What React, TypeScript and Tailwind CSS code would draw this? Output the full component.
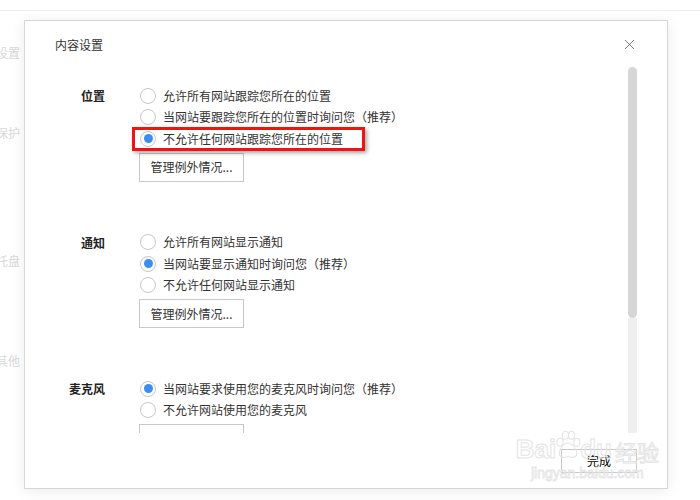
import { X } from 'lucide-react';

type Option = { label: string; checked?: boolean; highlight?: boolean };

const sections: { title: string; options: Option[] }[] = [
  {
    title: '位置',
    options: [
      { label: '允许所有网站跟踪您所在的位置' },
      { label: '当网站要跟踪您所在的位置时询问您（推荐）' },
      { label: '不允许任何网站跟踪您所在的位置', checked: true, highlight: true },
    ],
  },
  {
    title: '通知',
    options: [
      { label: '允许所有网站显示通知' },
      { label: '当网站要显示通知时询问您（推荐）', checked: true },
      { label: '不允许任何网站显示通知' },
    ],
  },
  {
    title: '麦克风',
    options: [
      { label: '当网站要求使用您的麦克风时询问您（推荐）', checked: true },
      { label: '不允许网站使用您的麦克风' },
    ],
  },
];

function Radio({ checked }: { checked?: boolean }) {
  return (
    <span className="w-4 h-4 rounded-full border border-[#c6c6c6] bg-white flex items-center justify-center shrink-0">
      {checked && <span className="w-[9px] h-[9px] rounded-full bg-[#3b8ef0]" />}
    </span>
  );
}

// faint "Baidu 经验" stamp in the bottom-right corner of the screenshot
function Watermark() {
  return (
    <div className="absolute right-[8px] bottom-[8px] flex flex-col items-center pointer-events-none select-none">
      <div className="flex items-end">
        <span className="text-[26px] leading-none font-bold text-transparent [-webkit-text-stroke:1px_#e4e4e4] font-['Liberation_Sans',sans-serif]">Bai</span>
        <svg width="30" height="30" viewBox="0 0 34 34" className="-mx-[3px] mb-[2px]">
          <g fill="none" stroke="#e4e4e4" strokeWidth="1.2">
            <ellipse cx="8" cy="14" rx="3.5" ry="4.5" />
            <ellipse cx="14" cy="6" rx="3.5" ry="4.5" />
            <ellipse cx="21" cy="6" rx="3.5" ry="4.5" />
            <ellipse cx="27" cy="14" rx="3.5" ry="4.5" />
            <path d="M17 15c-6 0-10 8-10 12 0 4 5 5 10 3 5 2 10 1 10-3 0-4-4-12-10-12z" />
          </g>
        </svg>
        <span className="text-[26px] leading-none font-bold text-transparent [-webkit-text-stroke:1px_#e4e4e4] font-['Liberation_Sans',sans-serif]">du</span>
        <span className="ml-[3px] text-[22px] leading-none text-transparent [-webkit-text-stroke:1px_#e4e4e4] font-['Noto_Sans_CJK_SC',sans-serif]">经验</span>
      </div>
      <span className="text-[14px] leading-none mt-[4px] text-transparent [-webkit-text-stroke:0.8px_#e4e4e4] font-['Liberation_Sans',sans-serif]">jingyan.baidu.com</span>
    </div>
  );
}

export default function App() {
  return (
    <div className="relative w-[700px] h-[500px] overflow-hidden bg-white font-['Noto_Sans_CJK_SC','Noto_Sans',sans-serif] text-[12px] text-[#333]">
      {/* background page behind the dialog */}
      <div className="h-[11px] border-b border-[#f0f0f0]" />
      <div className="flex flex-col -ml-[4px] text-[#d8d8d8] text-[12px]">
        <span className="mt-[33px]">设置</span>
        <span className="mt-[62px]">保护</span>
        <span className="mt-[110px]">托盘</span>
        <span className="mt-[82px]">其他</span>
      </div>

      {/* dialog */}
      <div className="absolute left-[24px] top-[20px] w-[644px] h-[469px] bg-white border border-[#d6d6d6] shadow-[0_2px_14px_rgba(0,0,0,0.08)] flex flex-col">
        <div className="h-[46px] flex items-center justify-between pl-[30px] pr-[29px] pt-[1px]">
          <span className="text-[12px] text-[#333]">内容设置</span>
          <X className="w-[17px] h-[17px] text-[#555]" strokeWidth={1.1} />
        </div>

        <div className="flex h-[366px]">
          <div className="flex-1 overflow-hidden pt-[18px]">
            {sections.map((s, i) => (
              <div key={s.title} className={`flex ${i > 0 ? 'mt-[50px]' : ''}`}>
                <div className="w-[80px] text-right font-bold text-[#222] leading-[21.5px] h-[21.5px]">{s.title}</div>
                <div className="ml-[35px] flex flex-col">
                  {s.options.map((o) => (
                    <div key={o.label} className="relative flex items-center h-[21.5px] gap-[7px]">
                      {o.highlight && (
                        <div className="absolute -left-[8px] -top-[1px] w-[233px] h-[24px] border-[3px] border-[#ee1414] shadow-[2px_2px_4px_rgba(0,0,0,0.35)]" />
                      )}
                      <Radio checked={o.checked} />
                      <span className="whitespace-nowrap">{o.label}</span>
                    </div>
                  ))}
                  <button className="mt-[3px] -ml-px w-[105px] h-[29px] border border-[#c8c8c8] bg-white text-[12px] text-[#333]">
                    管理例外情况...
                  </button>
                </div>
              </div>
            ))}
          </div>
          <div className="w-[9px] mr-[30px] flex flex-col">
            <div className="h-[251px] rounded-full bg-[#d6d6d6]" />
            <div className="flex-1 bg-[#efefef]" />
          </div>
        </div>

        <div className="flex justify-end pr-[30px] pt-[16px]">
          <button className="w-[76px] h-[24px] border border-[#c8c8c8] bg-white text-[12px] text-black leading-none">
            完成
          </button>
        </div>

        <Watermark />
      </div>
    </div>
  );
}
